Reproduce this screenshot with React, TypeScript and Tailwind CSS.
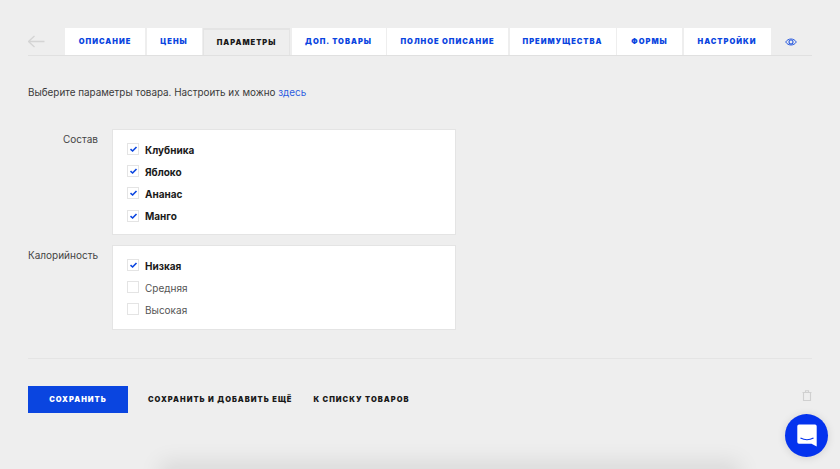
import React from 'react';

const tabs = [
  { label: 'ОПИСАНИЕ', width: 'w-[80px]' },
  { label: 'ЦЕНЫ', width: 'w-[55px]' },
  { label: 'ПАРАМЕТРЫ', width: 'w-[87px]', active: true },
  { label: 'ДОП. ТОВАРЫ', width: 'w-[94px]' },
  { label: 'ПОЛНОЕ ОПИСАНИЕ', width: 'w-[121px]' },
  { label: 'ПРЕИМУЩЕСТВА', width: 'w-[106px]' },
  { label: 'ФОРМЫ', width: 'w-[65px]' },
  { label: 'НАСТРОЙКИ', width: 'w-[87px]' },
];

const groups = [
  {
    title: 'Состав',
    height: 'h-[106px]',
    options: [
      { label: 'Клубника', checked: true },
      { label: 'Яблоко', checked: true },
      { label: 'Ананас', checked: true },
      { label: 'Манго', checked: true },
    ],
  },
  {
    title: 'Калорийность',
    height: 'h-[85px]',
    options: [
      { label: 'Низкая', checked: true },
      { label: 'Средняя', checked: false },
      { label: 'Высокая', checked: false },
    ],
  },
];

const Checkbox: React.FC<{ label: string; checked: boolean }> = ({ label, checked }) => (
  <div className="flex items-center h-[22.2px]">
    <span className="w-[12px] h-[12px] mr-[6px] mb-[2px] bg-white border border-[#e4e4e4] flex items-center justify-center">
      {checked && (
        <svg width="9" height="8" viewBox="0 0 9 8" fill="none">
          <path d="M1.5 4.2 L3.6 6 L7.5 2" stroke="#0a45e0" strokeWidth="1.6" />
        </svg>
      )}
    </span>
    <span className={checked ? 'text-[10px] font-bold text-[#1a1a1a]' : 'text-[10px] text-[#555]'}>{label}</span>
  </div>
);

export default function App() {
  return (
    <div className="relative h-[469px] overflow-hidden bg-[#eeeeee] px-[28px] pt-[28px] font-['Inter',sans-serif]">
      {/* Tabs */}
      <div className="flex items-stretch h-[28px] border-b border-[#e0e0e0]">
        <div className="w-[37px] flex items-center">
          <svg width="17" height="13" viewBox="0 0 17 13" fill="none">
            <path d="M16.5 6.5 H0.5 M6.5 1 L0.5 6.5 L6.5 12" stroke="#d4d4d4" strokeWidth="1.3" />
          </svg>
        </div>
        <div className="flex gap-[1.5px]">
          {tabs.map((t) => (
            <div
              key={t.label}
              className={`${t.width} h-[27px] pt-[1px] flex items-center justify-center text-[7.5px] font-black tracking-[1px] whitespace-nowrap ${
                t.active
                  ? 'bg-[#eeeeee] text-[#1a1a1a] border-t-2 border-x border-[#e4e4e4]'
                  : 'bg-white text-[#0a45e0]'
              }`}
            >
              {t.label}
            </div>
          ))}
        </div>
        <div className="ml-[14px] flex items-center">
          <svg width="12" height="10" viewBox="0 0 12 10" fill="none" stroke="#2d5de0">
            <path d="M0.7 5 C3 1 9 1 11.3 5 C9 9 3 9 0.7 5 Z" strokeWidth="1" />
            <circle cx="6" cy="5" r="2" strokeWidth="1.1" />
          </svg>
        </div>
      </div>

      <p className="mt-[28px] text-[9.9px] leading-[16px] text-[#3a3a3a]">
        Выберите параметры товара. Настроить их можно <a className="text-[#2d5de0]">здесь</a>
      </p>

      {/* Parameter groups */}
      <div className="mt-[29px] flex flex-col gap-[10px]">
        {groups.map((g) => (
          <div key={g.title} className="flex">
            <div className="w-[70px] pt-[2px] text-right text-[10px] leading-[16px] text-[#444] whitespace-nowrap">{g.title}</div>
            <div className={`${g.height} ml-[14px] w-[344px] bg-white border border-[#e4e4e4] pl-[14px] pt-[9px]`}>
              {g.options.map((o) => (
                <Checkbox key={o.label} label={o.label} checked={o.checked} />
              ))}
            </div>
          </div>
        ))}
      </div>

      {/* Actions */}
      <div className="mt-[28px] border-t border-[#e4e4e4] pt-[27px] flex items-start">
        <button className="w-[100px] h-[27px] pt-[1px] bg-[#0a45e0] text-white text-[7.5px] font-black tracking-[1px]">
          СОХРАНИТЬ
        </button>
        <span className="ml-[20px] leading-[28px] text-[7.5px] font-black tracking-[1px] text-[#1a1a1a]">
          СОХРАНИТЬ И ДОБАВИТЬ ЕЩЁ
        </span>
        <span className="ml-[21px] leading-[28px] text-[7.5px] font-black tracking-[1px] text-[#1a1a1a]">К СПИСКУ ТОВАРОВ</span>
        <svg className="ml-auto mt-[4px]" width="10" height="11" viewBox="0 0 10 11" fill="none" stroke="#d0d0d0">
          <path d="M1.5 2.5 H8.5 V10.5 H1.5 Z M0.5 2.5 H9.5 M3.5 2.5 V0.7 H6.5 V2.5" strokeWidth="1.1" />
        </svg>
      </div>

      {/* Card peeking from below */}
      <div className="absolute left-[170px] top-[472px] w-[560px] h-[40px] shadow-[0_0_22px_10px_rgba(0,0,0,0.09)]" />

      {/* Chat widget */}
      <div className="absolute left-[785px] top-[414px] w-[43px] h-[43px] rounded-full bg-[#0433ee] flex items-center justify-center shadow-[0_1px_8px_rgba(0,0,0,0.12)]">
        <svg width="20" height="23" viewBox="0 0 20 23" fill="none">
          <path d="M2 0.5 H18 Q19.7 0.5 19.7 2.2 V22.5 L14.5 19.8 H2 Q0.3 19.8 0.3 18 V2.2 Q0.3 0.5 2 0.5 Z" fill="white" />
          <path d="M3.5 14 Q10 17.5 16.5 14" stroke="#0433ee" strokeWidth="1.2" />
        </svg>
      </div>
    </div>
  );
}
